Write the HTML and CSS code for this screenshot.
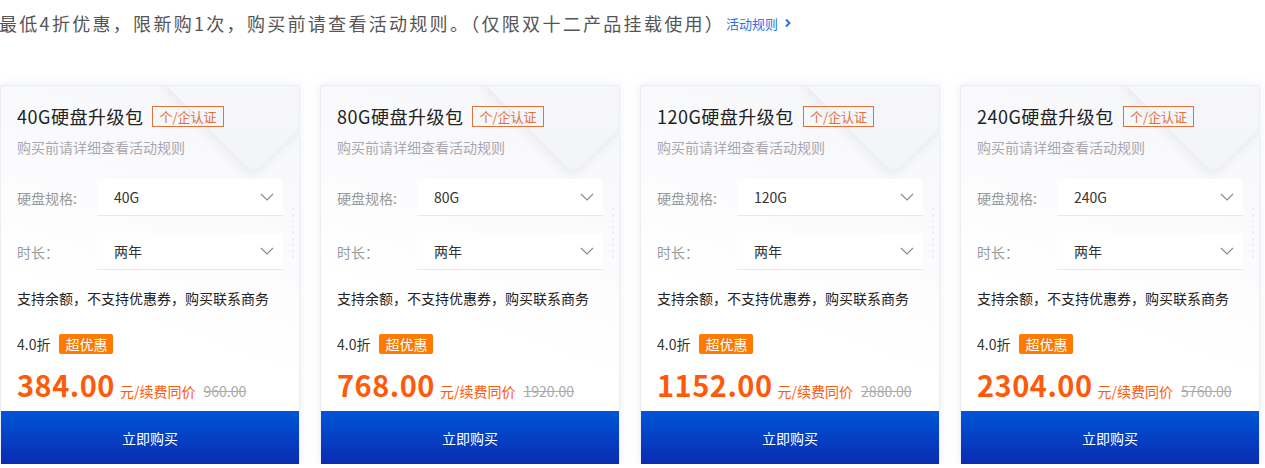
FILE: index.html
```html
<!DOCTYPE html>
<html lang="zh-CN">

<head>
  <meta charset="UTF-8">
  <meta name="viewport" content="width=device-width, initial-scale=1.0">
  <title>硬盘升级包</title>
  <link rel="stylesheet" href="styles.css">
</head>

<body>
  <div class="notice-bar">
    <span class="notice-text">最低4折优惠，限新购1次，购买前请查看活动规则。（仅限双十二产品挂载使用）</span>
    <a class="rule-link" href="#">活动规则
      <svg width="8" height="10" viewBox="0 0 8 10"><path d="M2 1.5 L5.5 5 L2 8.5" fill="none" stroke="#2f6ee8" stroke-width="2"/></svg>
    </a>
  </div>

  <div class="card-list">
    <div class="card">
      <div class="card-title"><span>40G硬盘升级包</span><span class="tag">个/企认证</span></div>
      <div class="card-sub">购买前请详细查看活动规则</div>
      <div class="field"><span class="field-label">硬盘规格:</span><div class="select"><span>40G</span><svg width="14" height="8" viewBox="0 0 14 8"><path d="M1 1 L7 7 L13 1" fill="none" stroke="#888" stroke-width="1.1"/></svg></div></div>
      <div class="field field-2"><span class="field-label">时长：</span><div class="select"><span>两年</span><svg width="14" height="8" viewBox="0 0 14 8"><path d="M1 1 L7 7 L13 1" fill="none" stroke="#888" stroke-width="1.1"/></svg></div></div>
      <div class="card-tip">支持余额，不支持优惠券，购买联系商务</div>
      <div class="discount"><span>4.0折</span><span class="hot">超优惠</span></div>
      <div class="price"><span class="amount">384.00</span><span class="unit">元/续费同价</span><span class="old">960.00</span></div>
      <button class="buy">立即购买</button>
    </div>

    <div class="card">
      <div class="card-title"><span>80G硬盘升级包</span><span class="tag">个/企认证</span></div>
      <div class="card-sub">购买前请详细查看活动规则</div>
      <div class="field"><span class="field-label">硬盘规格:</span><div class="select"><span>80G</span><svg width="14" height="8" viewBox="0 0 14 8"><path d="M1 1 L7 7 L13 1" fill="none" stroke="#888" stroke-width="1.1"/></svg></div></div>
      <div class="field field-2"><span class="field-label">时长：</span><div class="select"><span>两年</span><svg width="14" height="8" viewBox="0 0 14 8"><path d="M1 1 L7 7 L13 1" fill="none" stroke="#888" stroke-width="1.1"/></svg></div></div>
      <div class="card-tip">支持余额，不支持优惠券，购买联系商务</div>
      <div class="discount"><span>4.0折</span><span class="hot">超优惠</span></div>
      <div class="price"><span class="amount">768.00</span><span class="unit">元/续费同价</span><span class="old">1920.00</span></div>
      <button class="buy">立即购买</button>
    </div>

    <div class="card">
      <div class="card-title"><span>120G硬盘升级包</span><span class="tag">个/企认证</span></div>
      <div class="card-sub">购买前请详细查看活动规则</div>
      <div class="field"><span class="field-label">硬盘规格:</span><div class="select"><span>120G</span><svg width="14" height="8" viewBox="0 0 14 8"><path d="M1 1 L7 7 L13 1" fill="none" stroke="#888" stroke-width="1.1"/></svg></div></div>
      <div class="field field-2"><span class="field-label">时长：</span><div class="select"><span>两年</span><svg width="14" height="8" viewBox="0 0 14 8"><path d="M1 1 L7 7 L13 1" fill="none" stroke="#888" stroke-width="1.1"/></svg></div></div>
      <div class="card-tip">支持余额，不支持优惠券，购买联系商务</div>
      <div class="discount"><span>4.0折</span><span class="hot">超优惠</span></div>
      <div class="price"><span class="amount">1152.00</span><span class="unit">元/续费同价</span><span class="old">2880.00</span></div>
      <button class="buy">立即购买</button>
    </div>

    <div class="card">
      <div class="card-title"><span>240G硬盘升级包</span><span class="tag">个/企认证</span></div>
      <div class="card-sub">购买前请详细查看活动规则</div>
      <div class="field"><span class="field-label">硬盘规格:</span><div class="select"><span>240G</span><svg width="14" height="8" viewBox="0 0 14 8"><path d="M1 1 L7 7 L13 1" fill="none" stroke="#888" stroke-width="1.1"/></svg></div></div>
      <div class="field field-2"><span class="field-label">时长：</span><div class="select"><span>两年</span><svg width="14" height="8" viewBox="0 0 14 8"><path d="M1 1 L7 7 L13 1" fill="none" stroke="#888" stroke-width="1.1"/></svg></div></div>
      <div class="card-tip">支持余额，不支持优惠券，购买联系商务</div>
      <div class="discount"><span>4.0折</span><span class="hot">超优惠</span></div>
      <div class="price"><span class="amount">2304.00</span><span class="unit">元/续费同价</span><span class="old">5760.00</span></div>
      <button class="buy">立即购买</button>
    </div>
  </div>
</body>

</html>
```

FILE: styles.css
```css
body {
  margin: 0;
  padding: 0;
  background-color: #fff;
  color: #333;
  font-family: "Noto Sans CJK SC", "Noto Sans", sans-serif;
  font-size: 14px;
}

.notice-bar {
  display: flex;
  align-items: center;
  height: 24px;
  padding-top: 11px;
}

.notice-text {
  font-size: 18px;
  letter-spacing: 2.3px;
  color: #555;
  margin-left: -1px;
}

.rule-link {
  display: flex;
  align-items: center;
  gap: 6px;
  margin-left: 1px;
  font-size: 13px;
  color: #2f6ee8;
  text-decoration: none;
}

.card-list {
  display: flex;
  gap: 20px;
  margin-top: 50px;
}

.card {
  position: relative;
  width: 300px;
  box-sizing: border-box;
  border: 1px solid #eceef3;
  border-bottom: none;
  background: linear-gradient(200deg, #f5f6f9 0%, #fbfbfd 35%, #fff 60%);
  box-shadow: 0 0 8px rgba(200, 205, 220, 0.35);
  display: flex;
  flex-direction: column;
  overflow: hidden;
}

/* decoration in the top right corner */
.card::before {
  content: "";
  position: absolute;
  right: -20px;
  top: -70px;
  width: 130px;
  height: 130px;
  transform: rotate(45deg);
  border-radius: 10px;
  background: linear-gradient(135deg, #fbfbfd, #f3f4f8);
  box-shadow: 4px 6px 6px rgba(225, 227, 236, 0.45);
}

.card::after {
  content: "";
  position: absolute;
  right: 3px;
  top: 120px;
  width: 6px;
  height: 54px;
  background-image: radial-gradient(#eceef3 1px, transparent 1.2px);
  background-size: 6px 6px;
}

.card > * {
  position: relative;
  z-index: 1;
}

.card-title {
  display: flex;
  align-items: center;
  height: 24px;
  margin: 18px 16px 0;
  font-size: 18px;
  letter-spacing: 0.5px;
  color: #222;
}

.tag {
  margin-left: 9px;
  height: 19px;
  line-height: 19px;
  padding: 0 6px;
  border: 1px solid #e4703a;
  font-size: 13px;
  letter-spacing: 0;
  color: #e4703a;
}

.card-sub {
  margin: 9px 16px 0;
  line-height: 20px;
  color: #a8a8b0;
}

.field {
  display: flex;
  align-items: center;
  margin: 22px 16px 0;
}

.field-2 {
  margin-top: 17px;
}

.field-label {
  width: 80px;
  color: #999;
}

.select {
  flex: 1;
  display: flex;
  align-items: center;
  justify-content: space-between;
  height: 36px;
  padding: 0 9px 0 17px;
  background-color: #fff;
  border-bottom: 1px solid #e6e8ef;
  color: #333;
}

.card-tip {
  margin: 18px 16px 0;
  line-height: 20px;
  color: #222;
}

.discount {
  display: flex;
  align-items: center;
  margin: 26px 16px 0;
  height: 20px;
  color: #333;
}

.hot {
  margin-left: 9px;
  height: 20px;
  line-height: 20px;
  padding: 0 6px;
  border-radius: 2px;
  background-color: #ff7a00;
  color: #fff;
}

.price {
  display: flex;
  align-items: baseline;
  margin: 9px 16px 0;
  height: 34px;
}

.amount {
  font-size: 29px;
  font-weight: bold;
  color: #ff5a0a;
  letter-spacing: 0.5px;
}

.unit {
  margin-left: 5px;
  color: #ff5a0a;
}

.old {
  margin-left: 8px;
  color: #aaa;
  text-decoration: line-through;
}

.buy {
  margin-top: 14px;
  height: 53px;
  border: none;
  background: linear-gradient(180deg, #0055d8, #0a2cb0);
  color: #fff;
  font-family: inherit;
  font-size: 14px;
  cursor: pointer;
}
```
